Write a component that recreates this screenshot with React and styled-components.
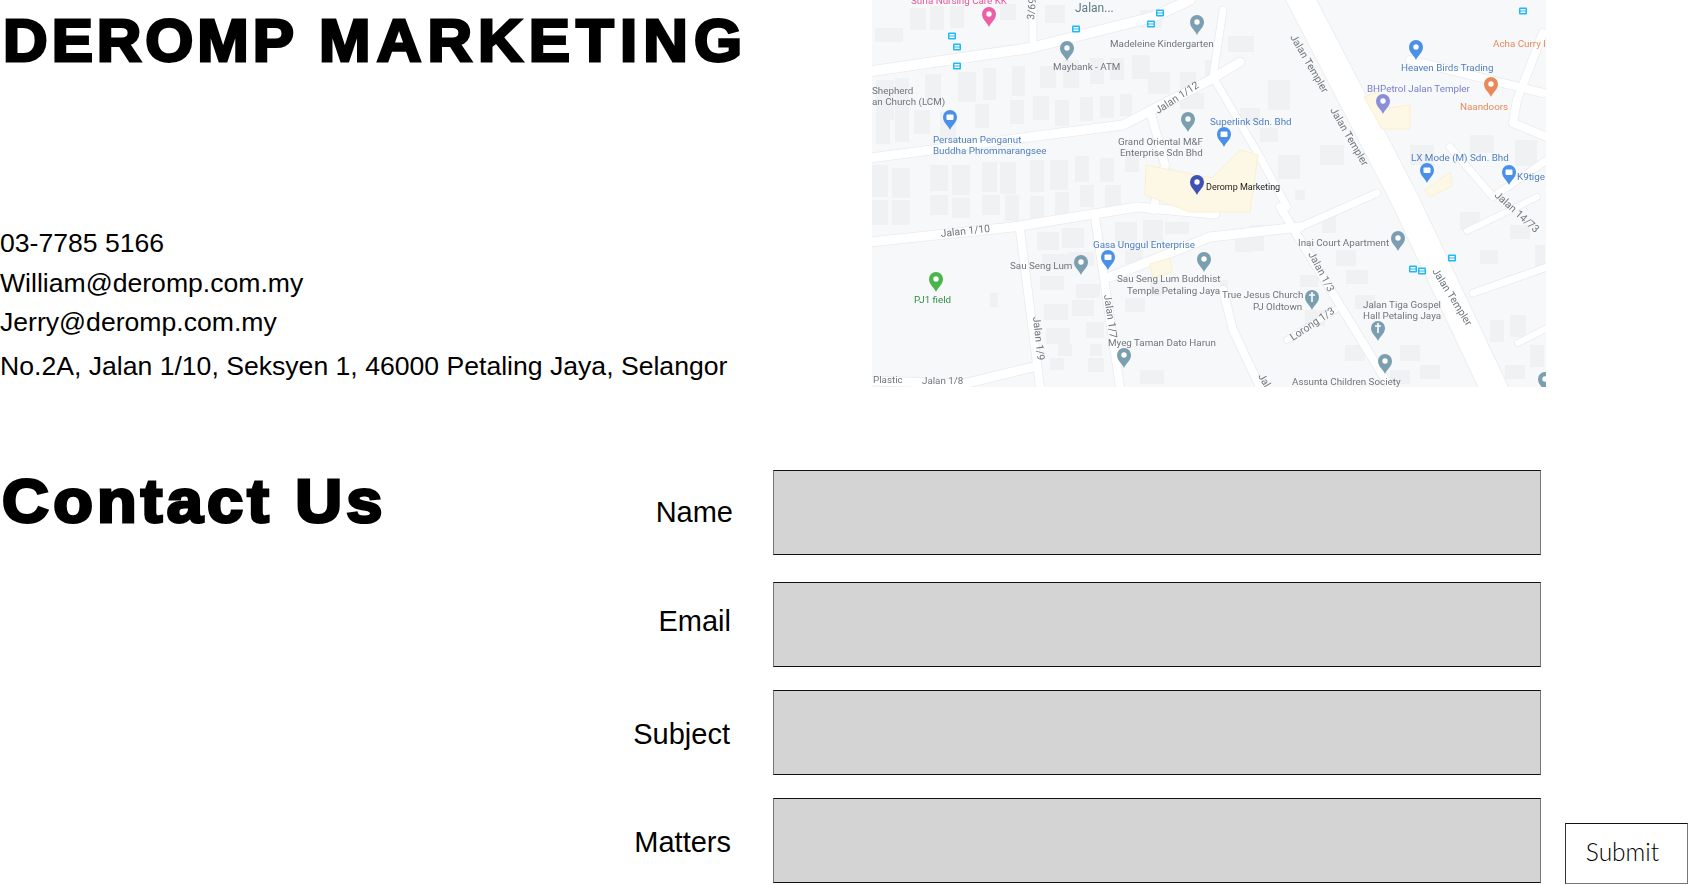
import React from "react";
import styled, { createGlobalStyle } from "styled-components";

const Global = createGlobalStyle`
  html, body { margin: 0; padding: 0; background: #fff; }
  body { font-family: "Liberation Sans", Arial, sans-serif; color: #000; }
`;

const Page = styled.div`
  width: 1688px;
  height: 885px;
  overflow: hidden;
  display: flex;
  flex-direction: column;
`;
const Top = styled.section`
  display: flex;
  height: 470px;
`;
const Info = styled.div`
  width: 872px;
  flex: none;
`;
const Title = styled.h1`
  margin: 0;
  padding: 7px 0 0 3px;
  height: 224px;
  box-sizing: border-box;
  font-size: 60px;
  line-height: 68px;
  font-weight: 700;
  word-spacing: 4px;
  -webkit-text-stroke: 2.8px #000;
  white-space: nowrap;
  transform: scaleX(1.03);
  transform-origin: left center;
`;
const Word = styled.span`
  letter-spacing: ${(p) => p.$track}px;
`;
const Line = styled.p`
  margin: ${(p) => p.$gap || 0}px 0 0;
  font-size: 26.6px;
  line-height: 39.5px;
  white-space: nowrap;
`;
const MapBox = styled.svg`
  display: block;
  flex: none;
  width: 674px;
  height: 387px;
  background: #f7f8f9;
  filter: blur(0.35px);
`;
const Bottom = styled.section`
  display: flex;
  flex: 1;
`;
const Heading = styled.h2`
  margin: 0;
  width: 583px;
  flex: none;
  padding-left: 2px;
  box-sizing: border-box;
  font-size: 62px;
  line-height: 62px;
  font-weight: 700;
  letter-spacing: 4px;
  -webkit-text-stroke: 3px #000;
  white-space: nowrap;
  transform: scaleX(1.047);
  transform-origin: left center;
  margin-right: 27px;
`;
const Form = styled.form`
  display: flex;
  flex: 1;
  align-items: flex-start;
`;
const Fields = styled.div`
  width: 931px;
  flex: none;
  margin-right: 24px;
`;
const Row = styled.div`
  display: flex;
  align-items: center;
  margin-top: ${(p) => p.$gap}px;
`;
const Label = styled.label`
  width: ${(p) => p.$w}px;
  flex: none;
  margin-right: ${(p) => 163 - p.$w}px;
  padding-top: ${(p) => p.$down || 0}px;
  padding-bottom: ${(p) => p.$up || 0}px;
  text-align: right;
  font-size: 29px;
  white-space: nowrap;
`;
const Input = styled.input`
  display: block;
  width: 768px;
  height: 85px;
  box-sizing: border-box;
  background: #d5d4d5;
  border-style: solid;
  border-width: 1.5px;
  border-color: #111 #777 #111 #777;
  padding: 0;
  outline: none;
`;
const Submit = styled.button`
  width: 123px;
  height: 61px;
  margin-top: 353px;
  box-sizing: border-box;
  background: #fff;
  border-style: solid;
  border-width: 1.5px;
  border-color: #111 #777 #777 #333;
  font-family: "Lato", sans-serif;
  font-size: 24.5px;
  font-weight: 300;
  color: #000;
  padding: 0 8px 4px 0;
`;

const Casing = styled.polyline`
  fill: none;
  stroke: #e9ebee;
  stroke-width: ${(p) => p.$w + 1.6}px;
  stroke-linejoin: round;
  stroke-linecap: round;
`;
const Road = styled.polyline`
  fill: none;
  stroke: #fff;
  stroke-width: ${(p) => p.$w}px;
  stroke-linejoin: round;
  stroke-linecap: round;
`;
const Block = styled.polygon`
  fill: #fdf7e6;
  stroke: #fbf0cf;
  stroke-width: 1px;
`;
const House = styled.rect`
  fill: #f0f1f2;
`;
const Lbl = styled.text`
  font-family: Roboto, "Liberation Sans", sans-serif;
  font-size: ${(p) => p.$s || 9.8}px;
  fill: ${(p) => p.$c || "#70767c"};
`;
const Stop = styled.rect`
  fill: #1fb9f5;
`;
const StopMark = styled.rect`
  fill: #fff;
`;

const BLUE = "#4a8fe8";
const GREY = "#7b9eb0";
const LINK = "#4f7fc0";
const ORANGE = "#e8895a";
const TXT = "#70767c";

const roads = [
  [10, "872,71 1030,48 1153,17 1190,0"],
  [9, "870,158 1037,136 1123,125 1210,80 1240,62"],
  [7, "1033,0 1033,45"],
  [9, "870,242 1013,227 1137,207 1215,214"],
  [8, "1020,230 1040,387"],
  [8, "1095,217 1120,387"],
  [9, "870,381 963,384 1033,367"],
  [9, "1110,277 1210,237 1300,227"],
  [27, "1298,-6 1405,200 1497,395"],
  [8, "1280,207 1390,387"],
  [7, "1300,227 1377,193"],
  [8, "1223,290 1233,330 1260,387"],
  [7, "1223,10 1213,77 1260,157 1287,207"],
  [8, "1410,60 1543,93"],
  [8, "1543,33 1517,100 1513,123 1547,137"],
  [7, "1450,147 1493,197 1547,160"],
  [6, "1467,231 1537,197"],
  [7, "1473,293 1547,267"],
  [6, "1518,343 1547,328"],
  [6, "1287,340 1335,310"],
  [8, "1150,110 1165,165 1153,210"],
];

const houses = [
  [910, 8, 16, 22], [930, 6, 14, 24], [950, 6, 14, 22], [875, 28, 28, 14], [1000, 4, 16, 16],
  [876, 80, 18, 40], [895, 78, 14, 40], [925, 74, 16, 30], [958, 72, 18, 30], [983, 68, 13, 32],
  [1012, 66, 13, 30], [1040, 66, 16, 22], [1063, 60, 16, 28], [1090, 58, 14, 26], [1110, 58, 14, 22],
  [1132, 55, 18, 24], [1148, 72, 22, 22], [1180, 72, 16, 24], [1205, 60, 14, 24],
  [1010, 100, 14, 24], [1033, 96, 16, 24], [1055, 100, 14, 26], [1080, 97, 13, 24], [1100, 96, 14, 22],
  [1120, 94, 12, 22], [1180, 93, 24, 16], [1140, 10, 22, 18], [1045, 5, 20, 18],
  [876, 118, 14, 26], [895, 118, 14, 24], [914, 110, 16, 24], [940, 112, 16, 26], [975, 104, 14, 24],
  [872, 165, 16, 32], [892, 168, 18, 30], [930, 165, 18, 26], [952, 165, 18, 30], [982, 162, 15, 30],
  [1000, 162, 16, 32], [1030, 160, 14, 32], [1050, 160, 18, 30], [1075, 156, 14, 26], [1100, 158, 14, 24],
  [1125, 150, 14, 22], [930, 195, 18, 20], [952, 198, 18, 20], [982, 195, 18, 20], [1005, 195, 14, 26],
  [1030, 196, 14, 24], [1055, 192, 14, 26], [1080, 185, 14, 22], [1105, 185, 16, 24],
  [872, 200, 16, 25], [892, 200, 18, 25],
  [1037, 232, 22, 18], [1062, 228, 22, 20], [1042, 254, 26, 16], [1068, 252, 26, 14], [1040, 276, 24, 14],
  [1076, 284, 24, 14], [1044, 304, 24, 16], [1072, 300, 22, 16], [1046, 328, 24, 16], [1086, 322, 18, 16],
  [1050, 358, 14, 12], [1088, 358, 16, 14], [1058, 344, 14, 12], [1090, 344, 12, 12], [990, 293, 8, 14],
  [1115, 222, 22, 20], [1143, 220, 20, 22], [1165, 222, 24, 12], [1125, 250, 18, 14], [1150, 280, 12, 16],
  [1125, 298, 20, 14], [1140, 370, 24, 14],
  [1228, 36, 26, 16], [1268, 80, 22, 30], [1240, 108, 20, 14], [1260, 128, 18, 14], [1278, 155, 22, 24],
  [1320, 145, 24, 20], [1295, 190, 10, 10], [1235, 230, 18, 22], [1250, 225, 14, 26], [1322, 215, 14, 18],
  [1336, 250, 20, 16], [1346, 270, 22, 14], [1355, 295, 20, 14], [1220, 280, 8, 10], [1300, 275, 18, 12],
  [1305, 310, 20, 16], [1345, 345, 20, 16], [1400, 345, 20, 16], [1420, 365, 20, 14], [1390, 370, 20, 14],
  [1410, 145, 24, 20], [1470, 135, 24, 18], [1515, 140, 22, 26], [1460, 212, 20, 18], [1480, 250, 18, 14],
  [1510, 225, 20, 14], [1535, 245, 10, 28], [1490, 320, 14, 22], [1510, 315, 16, 22], [1530, 345, 14, 22],
  [1505, 365, 20, 14],
];

const stops = [
  [952, 36], [957, 47], [957, 66], [1076, 29], [1160, 13], [1151, 24],
  [1523, 11], [1413, 269], [1422, 271], [1452, 258],
];

function Pin({ x, y, color, children }) {
  return (
    <g transform={`translate(${x} ${y})`}>
      <path d="M0 0C-1.5-4.5-7-7-7-13A7 7 0 1 1 7-13C7-7 1.5-4.5 0 0Z" fill={color} />
      {children || <circle cx="0" cy="-13" r="2.7" fill="#fff" />}
    </g>
  );
}
const Case = () => <rect x="-3.5" y="-15.5" width="7" height="5.5" rx="1" fill="#fff" />;
const Cross = () => <path d="M0-18V-8M-3-15H3" stroke="#fff" strokeWidth="1.6" />;

const labels = [
  ["Suria Nursing Care KK", 911, 4, "#e9559c"],
  ["Jalan...", 1075, 12, "#5f7a86", 12],
  ["Madeleine Kindergarten", 1110, 47, TXT],
  ["Maybank - ATM", 1053, 70, TXT],
  ["Shepherd", 872, 94, TXT],
  ["an Church (LCM)", 872, 105, TXT],
  ["Persatuan Penganut", 933, 143, LINK],
  ["Buddha Phrommarangsee", 933, 154, LINK],
  ["Grand Oriental M&F", 1118, 145, TXT],
  ["Enterprise Sdn Bhd", 1120, 156, TXT],
  ["Superlink Sdn. Bhd", 1210, 125, LINK],
  ["Heaven Birds Trading", 1401, 71, LINK],
  ["BHPetrol Jalan Templer", 1367, 92, "#7a7fc8"],
  ["Naandoors", 1460, 110, ORANGE],
  ["Acha Curry I", 1493, 47, ORANGE],
  ["LX Mode (M) Sdn. Bhd", 1411, 161, LINK],
  ["K9tige", 1517, 180, LINK],
  ["PJ1 field", 914, 303, "#2f8f46"],
  ["Sau Seng Lum", 1010, 269, TXT],
  ["Gasa Unggul Enterprise", 1093, 248, LINK],
  ["Sau Seng Lum Buddhist", 1117, 282, TXT],
  ["Temple Petaling Jaya", 1127, 294, TXT],
  ["True Jesus Church", 1222, 298, TXT],
  ["PJ Oldtown", 1253, 310, TXT],
  ["Inai Court Apartment", 1298, 246, TXT],
  ["Jalan Tiga Gospel", 1363, 308, TXT],
  ["Hall Petaling Jaya", 1363, 319, TXT],
  ["Myeg Taman Dato Harun", 1108, 346, TXT],
  ["Assunta Children Society", 1292, 385, TXT],
  ["Plastic", 873, 383, TXT],
  ["Jalan 1/8", 922, 384, TXT],
];
const rotated = [
  ["Jalan 1/12", 1158, 114, -33],
  ["Jalan 1/10", 941, 237, -6],
  ["Jalan 1/9", 1033, 317, 84],
  ["Jalan 1/7", 1104, 295, 82],
  ["Jalan 1/3", 1308, 254, 62],
  ["Lorong 1/3", 1293, 341, -34],
  ["Jalan 14/73", 1494, 196, 42],
  ["Jalan Templer", 1290, 37, 60],
  ["Jalan Templer", 1330, 110, 60],
  ["Jalan Templer", 1432, 271, 58],
  ["3/69", 1034, 20, -85],
  ["Jal", 1258, 376, 60],
];

function MapDrawing() {
  return (
    <MapBox viewBox="872 0 674 387" aria-label="Map of Deromp Marketing">
      {houses.map(([x, y, w, h], i) => (
        <House key={i} x={x} y={y} width={w} height={h} />
      ))}
      {roads.map(([w, pts], i) => (
        <Casing key={i} $w={w} points={pts} />
      ))}
      {roads.map(([w, pts], i) => (
        <Road key={i} $w={w} points={pts} />
      ))}
      <Block points="1146,165 1212,178 1240,150 1258,155 1250,212 1190,212 1145,195" />
      <Block points="1364,97 1377,92 1390,108 1410,105 1410,129 1382,129" />
      <Block points="1150,264 1170,258 1172,272 1153,278" />
      <Block points="1425,190 1450,172 1452,186 1430,197" />
      {stops.map(([x, y], i) => (
        <g key={i}>
          <Stop x={x - 4} y={y - 3.5} width={8} height={7} rx={1} />
          <StopMark x={x - 2.5} y={y - 2} width={5} height={1.5} />
          <StopMark x={x - 2.5} y={y + 0.5} width={5} height={1.5} />
        </g>
      ))}
      <Pin x={989} y={27} color="#ec5fa4" />
      <Pin x={1067} y={61} color={GREY} />
      <Pin x={1197} y={35} color={GREY} />
      <Pin x={950} y={130} color={BLUE}><Case /></Pin>
      <Pin x={1188} y={132} color={GREY} />
      <Pin x={1224} y={147} color={BLUE}><Case /></Pin>
      <Pin x={1197} y={195} color="#3f51b5" />
      <Pin x={1416} y={60} color={BLUE} />
      <Pin x={1383} y={114} color="#8a8fd8" />
      <Pin x={1491} y={97} color={ORANGE} />
      <Pin x={1427} y={183} color={BLUE}><Case /></Pin>
      <Pin x={1509} y={185} color={BLUE}><Case /></Pin>
      <Pin x={936} y={292} color="#4ab54a" />
      <Pin x={1081} y={275} color={GREY} />
      <Pin x={1108} y={270} color={BLUE}><Case /></Pin>
      <Pin x={1204} y={272} color={GREY} />
      <Pin x={1398} y={251} color={GREY} />
      <Pin x={1312} y={310} color={GREY}><Cross /></Pin>
      <Pin x={1378} y={341} color={GREY}><Cross /></Pin>
      <Pin x={1385} y={374} color={GREY} />
      <Pin x={1124} y={368} color={GREY} />
      <Pin x={1545} y={392} color={GREY} />
      {labels.map(([t, x, y, c, s], i) => (
        <Lbl key={i} x={x} y={y} $c={c} $s={s}>{t}</Lbl>
      ))}
      {rotated.map(([t, x, y, r], i) => (
        <Lbl key={i} x={x} y={y} $s={10.4} transform={`rotate(${r} ${x} ${y})`}>{t}</Lbl>
      ))}
      <Lbl x={1206} y={190} $c="#222" $s={9}>Deromp Marketing</Lbl>
    </MapBox>
  );
}

export default function App() {
  return (
    <Page>
      <Global />
      <Top>
        <Info>
          <Title><Word $track={3.8}>DEROMP</Word> <Word $track={5.9}>MARKETING</Word></Title>
          <Line>03-7785 5166</Line>
          <Line>William@deromp.com.my</Line>
          <Line>Jerry@deromp.com.my</Line>
          <Line $gap={4}>No.2A, Jalan 1/10, Seksyen 1, 46000 Petaling Jaya, Selangor</Line>
        </Info>
        <MapDrawing />
      </Top>
      <Bottom>
        <Heading>Contact Us</Heading>
        <Form>
          <Fields>
            <Row $gap={0}><Label $w={123}>Name</Label><Input /></Row>
            <Row $gap={27}><Label $w={121} $up={6}>Email</Label><Input /></Row>
            <Row $gap={23}><Label $w={120} $down={4}>Subject</Label><Input /></Row>
            <Row $gap={23}><Label $w={121} $down={4}>Matters</Label><Input /></Row>
          </Fields>
          <Submit type="button">Submit</Submit>
        </Form>
      </Bottom>
    </Page>
  );
}
